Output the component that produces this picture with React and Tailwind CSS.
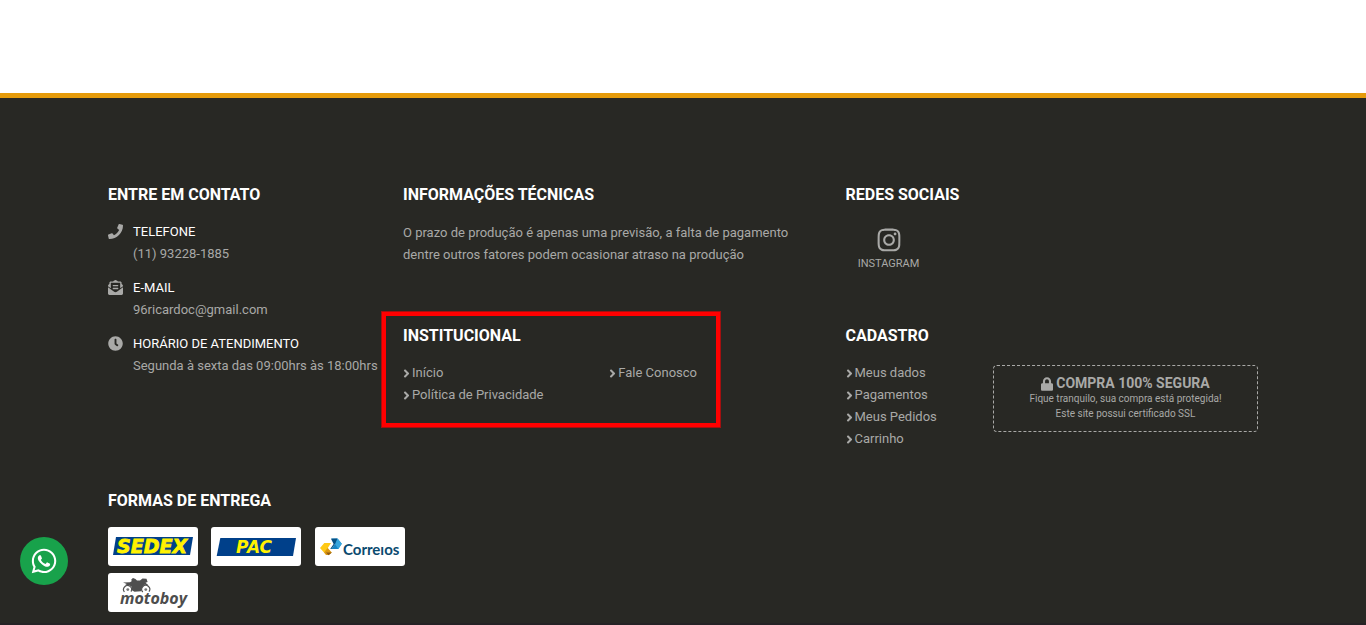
import React from "react";
import {
  FaPhone,
  FaEnvelopeOpenText,
  FaClock,
  FaAngleRight,
  FaInstagram,
  FaLock,
  FaWhatsapp,
} from "react-icons/fa";

function Section({ title, className = "", children }) {
  return (
    <section className={`px-[15px] ${className}`}>
      <h2 className="mb-3.5 text-base leading-6 font-bold text-white uppercase">{title}</h2>
      {children}
    </section>
  );
}

function ContactItem({ icon: Icon, label, children }) {
  return (
    <li className="flex gap-2.5">
      <Icon className="mt-[3px] h-[15px] w-[15px] shrink-0" aria-hidden="true" />
      <div className="whitespace-nowrap">
        <h3 className="font-normal text-white uppercase">{label}</h3>
        <p>{children}</p>
      </div>
    </li>
  );
}

function FooterLink({ children }) {
  return (
    <li className="h-[22px]">
      <a href="#" className="inline-flex items-center gap-0.5 hover:text-white">
        <FaAngleRight className="h-[13px] w-[7px]" viewBox="0 0 256 512" aria-hidden="true" />
        {children}
      </a>
    </li>
  );
}

function Card({ label, children }) {
  return (
    <li className="h-[39px] w-[90px] overflow-hidden rounded-[3px] bg-white">
      <svg viewBox="0 0 90 39" className="h-full w-full" role="img" aria-label={label}>
        {children}
      </svg>
    </li>
  );
}

function SedexLogo() {
  return (
    <Card label="Sedex">
      <path d="M8 10H85L82 28H5Z" fill="#00408a" />
      <text x="9" y="26" fill="#fff200" stroke="#fff200" strokeWidth="0.8" className="font-['DejaVu_Sans',sans-serif] text-[19px] font-bold italic">
        SEDEX
      </text>
    </Card>
  );
}

function PacLogo() {
  return (
    <Card label="PAC">
      <path d="M9.3 11H85L82 29H5.7Z" fill="#00408a" />
      <text x="25" y="26" fill="#fff200" className="font-['DejaVu_Sans',sans-serif] text-[17px] font-bold italic">
        PAC
      </text>
    </Card>
  );
}

function CorreiosLogo() {
  return (
    <Card label="Correios">
      <path d="M9.3 16H16L12.8 21L16 25.5H9L5 21Z" fill="#ffc915" />
      <path d="M9 25.5L12.6 21L16.8 25.5L14 28H11Z" fill="#dd9a12" />
      <path d="M11 25.5H16.8L13.5 28.2Z" fill="#8e5a16" />
      <path d="M16.3 11.5H22.5L26.8 16.8L23.3 22H16.5L20 17Z" fill="#1684c4" />
      <path d="M22.5 11.5L26.8 16.8L23.3 22L20 17Z" fill="#37a6dd" />
      <path d="M16 11.8L22.3 11.5L20 17L16.5 22H15.2L18.6 17Z" fill="#075184" />
      <text x="28" y="28" fill="#0b4a6f" className="font-['Lato',sans-serif] text-[15px] font-bold">
        Correıos
      </text>
    </Card>
  );
}

function MotoboyLogo() {
  return (
    <Card label="Motoboy">
      <g fill="none" stroke="#555" strokeWidth="1.2">
        <path d="M16.4 19A4 4 0 1 1 23 18.6" />
        <path d="M34.8 19A4 4 0 1 1 41 18.6" />
      </g>
      <circle cx="19.8" cy="16.6" r="1.4" fill="#777" />
      <circle cx="37.8" cy="16.6" r="1.4" fill="#777" />
      <path
        d="M15 9.4L22 9.2L23.6 8.2L23.4 6.2L25 5L27.5 6L29 7.6L32 7.6L34.5 5.6L38.5 5.8L39.6 9L37.5 9.8L40.5 12.2L36.6 11.8L34 14.5L33 18.2L26.5 18.8L24.2 17.4L23.4 13.4L20.5 12L16.5 12.4L18.8 11Z"
        fill="#4f4f4f"
      />
      <text x="12" y="30.5" fill="#4d4d4d" className="font-['Open_Sans',sans-serif] text-[16px] font-bold italic">
        motoboy
      </text>
    </Card>
  );
}

export default function App() {
  return (
    <div className="font-['Roboto',sans-serif] text-[13px] leading-[22px] text-[#a9a9a7]">
      <main className="h-[93px] bg-white" />
      <footer className="border-t-[5px] border-[#e59b0b] bg-[#282824] pt-[85px]">
        <div className="mx-auto max-w-[1180px]">
          <div className="grid grid-cols-[minmax(0,2fr)_minmax(0,3fr)_minmax(0,3fr)]">
            <Section title="Entre em contato" className="row-span-2">
              <ul className="flex flex-col gap-3">
                <ContactItem icon={FaPhone} label="Telefone">(11) 93228-1885</ContactItem>
                <ContactItem icon={FaEnvelopeOpenText} label="E-mail">96ricardoc@gmail.com</ContactItem>
                <ContactItem icon={FaClock} label="Horário de atendimento">
                  Segunda à sexta das 09:00hrs às 18:00hrs
                </ContactItem>
              </ul>
            </Section>

            <Section title="Informações técnicas" className="pb-[58px]">
              <p className="pt-px">
                O prazo de produção é apenas uma previsão, a falta de pagamento dentre outros fatores podem ocasionar
                atraso na produção
              </p>
            </Section>

            <Section title="Redes sociais">
              <a href="#" className="flex w-[86px] flex-col items-center pt-1.5 text-[11px] uppercase">
                <FaInstagram className="h-[26px] w-[26px]" aria-hidden="true" />
                Instagram
              </a>
            </Section>

            <Section title="Institucional" className="relative">
              <ul className="grid grid-cols-2">
                <FooterLink>Início</FooterLink>
                <FooterLink>Fale Conosco</FooterLink>
                <FooterLink>Política de Privacidade</FooterLink>
              </ul>
              <div
                className="pointer-events-none absolute -top-3 -left-1.5 h-[115px] w-[338px] border-4 border-[#ff0000] outline-1 outline-[#a31010]"
                aria-hidden="true"
              />
            </Section>

            <Section title="Cadastro">
              <div className="flex items-start justify-between">
                <ul>
                  <FooterLink>Meus dados</FooterLink>
                  <FooterLink>Pagamentos</FooterLink>
                  <FooterLink>Meus Pedidos</FooterLink>
                  <FooterLink>Carrinho</FooterLink>
                </ul>
                <div className="mt-[3px] w-[265px] rounded border border-dashed border-[#a9a9a7] p-2.5 text-center text-[10px] leading-[15px]">
                  <p className="flex items-center justify-center gap-[3px] text-sm leading-[15px] font-bold uppercase">
                    <FaLock className="h-3.5 w-3" viewBox="0 0 448 512" aria-hidden="true" />
                    Compra 100% segura
                  </p>
                  <p>Fique tranquilo, sua compra está protegida!</p>
                  <p>Este site possui certificado SSL</p>
                </div>
              </div>
            </Section>
          </div>

          <Section title="Formas de entrega" className="pt-[39px] pb-[11px]">
            <ul className="grid w-[310px] grid-cols-3 gap-y-[7px]">
              <SedexLogo />
              <PacLogo />
              <CorreiosLogo />
              <MotoboyLogo />
            </ul>
          </Section>
        </div>
        <div className="h-0.5 bg-[#252225]" />
      </footer>

      <a
        href="#"
        aria-label="WhatsApp"
        className="fixed bottom-10 left-5 flex h-12 w-12 items-center justify-center rounded-full bg-[#18a24b] text-white"
      >
        <FaWhatsapp className="h-7 w-7" aria-hidden="true" />
      </a>
    </div>
  );
}
